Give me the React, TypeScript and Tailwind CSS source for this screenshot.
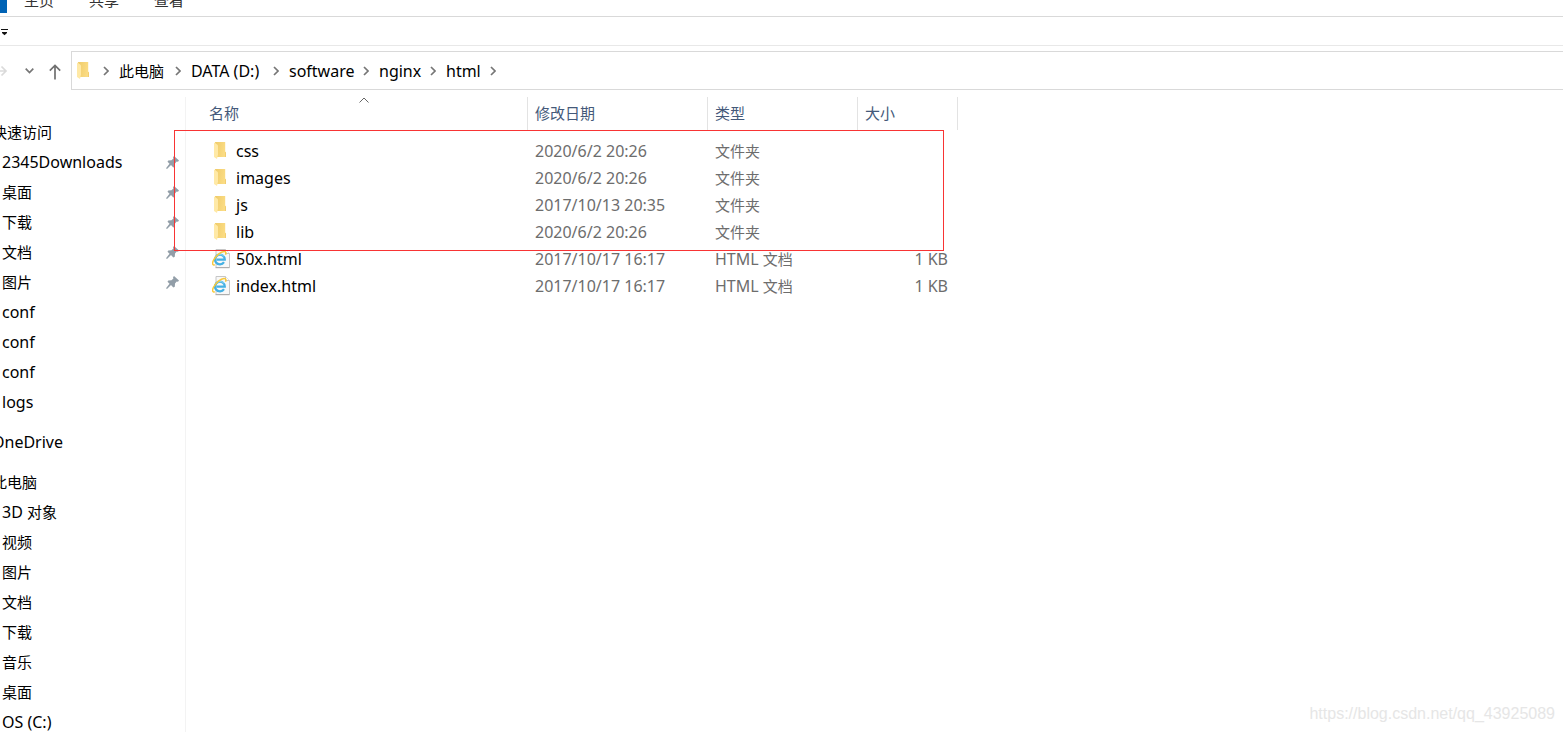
import clsx from "clsx";
import { Fragment } from "react";

type Entry = {
  name: string;
  date: string;
  type: string;
  size?: string;
};

const entries: Entry[] = [
  { name: "css", date: "2020/6/2 20:26", type: "文件夹" },
  { name: "images", date: "2020/6/2 20:26", type: "文件夹" },
  { name: "js", date: "2017/10/13 20:35", type: "文件夹" },
  { name: "lib", date: "2020/6/2 20:26", type: "文件夹" },
  {
    name: "50x.html",
    date: "2017/10/17 16:17",
    type: "HTML 文档",
    size: "1 KB",
  },
  {
    name: "index.html",
    date: "2017/10/17 16:17",
    type: "HTML 文档",
    size: "1 KB",
  },
];

const sidebar = [
  {
    title: "快速访问",
    items: [
      { label: "2345Downloads", pinned: true },
      { label: "桌面", pinned: true },
      { label: "下载", pinned: true },
      { label: "文档", pinned: true },
      { label: "图片", pinned: true },
      { label: "conf" },
      { label: "conf" },
      { label: "conf" },
      { label: "logs" },
    ],
  },
  { title: "OneDrive", items: [] },
  {
    title: "此电脑",
    items: [
      { label: "3D 对象" },
      { label: "视频" },
      { label: "图片" },
      { label: "文档" },
      { label: "下载" },
      { label: "音乐" },
      { label: "桌面" },
      { label: "OS (C:)" },
    ],
  },
];

const crumbs = [
  { label: "此电脑", width: "w-[45px]" },
  { label: "DATA (D:)", width: "w-[71px]" },
  { label: "software", width: "w-[63px]" },
  { label: "nginx", width: "w-[40px]" },
  { label: "html", width: "w-[33px]" },
];

// Chinese glyphs are set one pixel smaller than the latin ones
const Mixed = ({ text }: { text: string }) => (
  <>
    {text.split(/([\u4e00-\u9fff]+)/).map((part, i) =>
      i % 2 ? (
        <span key={i} className="text-[15px]">
          {part}
        </span>
      ) : (
        <Fragment key={i}>{part}</Fragment>
      )
    )}
  </>
);

const FolderIcon = ({ className }: { className?: string }) => (
  <svg
    viewBox="0 0 13 18"
    className={clsx("h-[18px] w-[13px] shrink-0", className)}
    aria-hidden="true"
  >
    <defs>
      <linearGradient id="folderBack" x1="0" x2="1" y1="0" y2="0.3">
        <stop offset="0" stopColor="#efcb69" />
        <stop offset="1" stopColor="#fbdc84" />
      </linearGradient>
    </defs>
    <path d="M1 0h10.200v9.500l.8.8V15H3z" fill="url(#folderBack)" />
    <path d="M11.200 10l.8.5V15h-.8z" fill="#efca6c" />
    <path d="M0 .5 3.200 2.600Q4 3.200 4 4v8.500L3 17 0 15z" fill="#ffe9a6" />
  </svg>
);

const HtmlIcon = () => (
  <svg
    viewBox="0 0 18 20"
    className="h-5 w-[18px] shrink-0"
    aria-hidden="true"
  >
    <path d="M4 .5h9.500l4 4v14H4z" fill="#f8f8f8" stroke="#c6c6c6" />
    <path d="M13.500.5v4h4" fill="#fff" stroke="#c6c6c6" />
    <path d="M3.500 18.700h14" stroke="#a9a9a9" />
    <path
      d="M12 13.200A4.900 4.900 0 1 1 12.800 10.600H4.500"
      fill="none"
      stroke="#45b1e4"
      strokeWidth="2.200"
    />
    <path d="M3.900 8A5 5 0 0 1 12 7.200" fill="none" stroke="#8ed8f5" />
    <path
      d="M2.800 15.800C.4 16.500-.1 14.400 1.600 11 4 6.600 8.800 2.700 12 2.500c2-.1 2.300 1.300 1.500 3.200"
      fill="none"
      stroke="#f8c93c"
      strokeWidth="1.500"
    />
  </svg>
);

const PinIcon = () => (
  <svg viewBox="0 0 13 13" className="h-[13px] w-[13px]" aria-hidden="true">
    <path
      d="M8 0 13 4.500 12 5.800 10.700 5.600 9 7.400 8.800 10.700 7.300 11.500 5 9 1 13 0 12.200 3.500 7.700 1.500 5.700 2.300 4.400 5.500 4.300 7.400 2.500 7 1.200z"
      fill="#929ea8"
    />
  </svg>
);

const Chevron = () => (
  <svg viewBox="0 0 6 10" className="h-[10px] w-[6px]" aria-hidden="true">
    <path d="M1 1l4 4-4 4" fill="none" stroke="#767676" strokeWidth="1.700" />
  </svg>
);

const headings = [
  { label: "名称", pad: "pl-[23px]" },
  { label: "修改日期", pad: "pl-[7px]" },
  { label: "类型", pad: "pl-[7px]" },
  { label: "大小", pad: "pl-[7px]" },
];

const Ribbon = () => (
  <>
    <div className="h-[17px] shrink-0 overflow-hidden border-b border-[#d9d9d9]">
      <div className="-mt-[15px] flex h-[30px] items-start text-[15px] text-[#333]">
        <button aria-label="文件" className="h-7 w-[7px] bg-[#0063b5]" />
        <div className="ml-[17px] flex gap-[35px]">
          <button className="h-[30px]">主页</button>
          <button className="h-[30px]">共享</button>
          <button className="h-[30px]">查看</button>
        </div>
      </div>
    </div>
    <div className="flex h-[29px] shrink-0 items-center border-b border-[#e8e8e8] pt-[2px]">
      <button aria-label="自定义快速访问工具栏">
        <svg viewBox="0 0 8 7" className="h-[7px] w-2">
          <path d="M2 3h5v1L4.500 6.200 2 4z" fill="#111" />
          <path d="M1 .5h7" stroke="#111" />
        </svg>
      </button>
    </div>
  </>
);

const AddressBar = () => (
  <div className="mt-[5px] flex h-[39px] shrink-0 items-center">
    <div className="flex w-[71px] shrink-0 items-center">
      <button aria-label="前进" disabled>
        <svg viewBox="0 0 8 12" className="h-3 w-2">
          <path
            d="M0 6h6M1.500 1.500 6 6l-4.500 4.500"
            fill="none"
            stroke="#dadada"
            strokeWidth="1.700"
          />
        </svg>
      </button>
      <button aria-label="最近浏览的位置" className="ml-[17px]">
        <svg viewBox="0 0 9 6" className="h-[6px] w-[9px]">
          <path
            d="M.7.7 4.500 4.500 8.300.7"
            fill="none"
            stroke="#767676"
            strokeWidth="1.700"
          />
        </svg>
      </button>
      <button aria-label="上移" className="ml-[15px] mt-[3px]">
        <svg viewBox="0 0 12 16" className="h-4 w-3">
          <path
            d="M6 15.500V1.500M.8 6.700 6 1.500l5.200 5.200"
            fill="none"
            stroke="#707070"
            strokeWidth="1.700"
          />
        </svg>
      </button>
    </div>
    <nav
      aria-label="路径"
      className="flex h-full grow items-center border-y border-l border-[#d9d9d9] pl-[5px]"
    >
      <FolderIcon />
      <span className="ml-[13px] mr-[10px]">
        <Chevron />
      </span>
      {crumbs.map((crumb) => (
        <Fragment key={crumb.label}>
          <button
            className={clsx("text-left whitespace-nowrap", crumb.width)}
          >
            <Mixed text={crumb.label} />
          </button>
          <span className="ml-[11px] mr-[10px]">
            <Chevron />
          </span>
        </Fragment>
      ))}
    </nav>
  </div>
);

const Sidebar = () => (
  <aside className="flex w-[186px] shrink-0 flex-col gap-[10px] border-r border-[#f3f3f3] pt-5">
    {sidebar.map((group) => (
      <section key={group.title}>
        <h2 className="-ml-2 h-[30px] leading-[30px]">
          <Mixed text={group.title} />
        </h2>
        <ul>
          {group.items.map((item, i) => (
            <li
              key={i}
              className="flex h-[30px] items-center justify-between pl-[2px] pr-[6px]"
            >
              <a href="#">
                <Mixed text={item.label} />
              </a>
              {"pinned" in item && item.pinned && <PinIcon />}
            </li>
          ))}
        </ul>
      </section>
    ))}
  </aside>
);

const FileList = () => (
  <main className="relative grow">
    <table className="w-[772px] table-fixed border-separate border-spacing-0">
      <colgroup>
        <col className="w-[342px]" />
        <col className="w-[180px]" />
        <col className="w-[150px]" />
        <col className="w-[100px]" />
      </colgroup>
      <thead>
        <tr>
          {headings.map((heading, i) => (
            <th
              key={heading.label}
              className="relative p-0 pb-[7px] font-normal"
            >
              <button
                className={clsx(
                  "block h-[33px] w-full border-r border-[#e3e3e3] text-left text-[15px] text-[#44597a]",
                  heading.pad
                )}
              >
                {heading.label}
              </button>
              {i === 0 && (
                <svg
                  viewBox="0 0 10 6"
                  className="absolute top-0 left-[173px] h-[6px] w-[10px]"
                  aria-hidden="true"
                >
                  <path d="M.5 5.500 5 1l4.500 4.500" fill="none" stroke="#666" />
                </svg>
              )}
            </th>
          ))}
        </tr>
      </thead>
      <tbody>
        {entries.map((entry) => (
          <tr key={entry.name} className="h-[27px] text-[#6d6d6d]">
            <td className="p-0 pl-[26px]">
              <div className="flex h-[27px] items-center text-black">
                <span className="flex w-6 shrink-0">
                  {entry.size ? (
                    <HtmlIcon />
                  ) : (
                    <FolderIcon className="ml-[2px]" />
                  )}
                </span>
                {entry.name}
              </div>
            </td>
            <td className="p-0 pl-[7px]">{entry.date}</td>
            <td className="p-0 pl-[7px]">
              <Mixed text={entry.type} />
            </td>
            <td className="p-0 pr-[10px] text-right">{entry.size}</td>
          </tr>
        ))}
      </tbody>
    </table>
    {/* red frame round the four folders */}
    <div className="pointer-events-none absolute top-[33px] -left-3 h-[121px] w-[770px] border border-[#f83434]" />
  </main>
);

export default function App() {
  return (
    <div className="relative flex h-screen flex-col overflow-hidden bg-white font-['Noto_Sans','Noto_Sans_CJK_SC',sans-serif] text-base text-black">
      <Ribbon />
      <AddressBar />
      <div className="mt-[7px] flex grow">
        <Sidebar />
        <FileList />
      </div>
      <p className="absolute right-2 bottom-[6px] font-['Liberation_Sans',sans-serif] text-base text-[#e6e6e6]">
        https://blog.csdn.net/qq_43925089
      </p>
    </div>
  );
}
